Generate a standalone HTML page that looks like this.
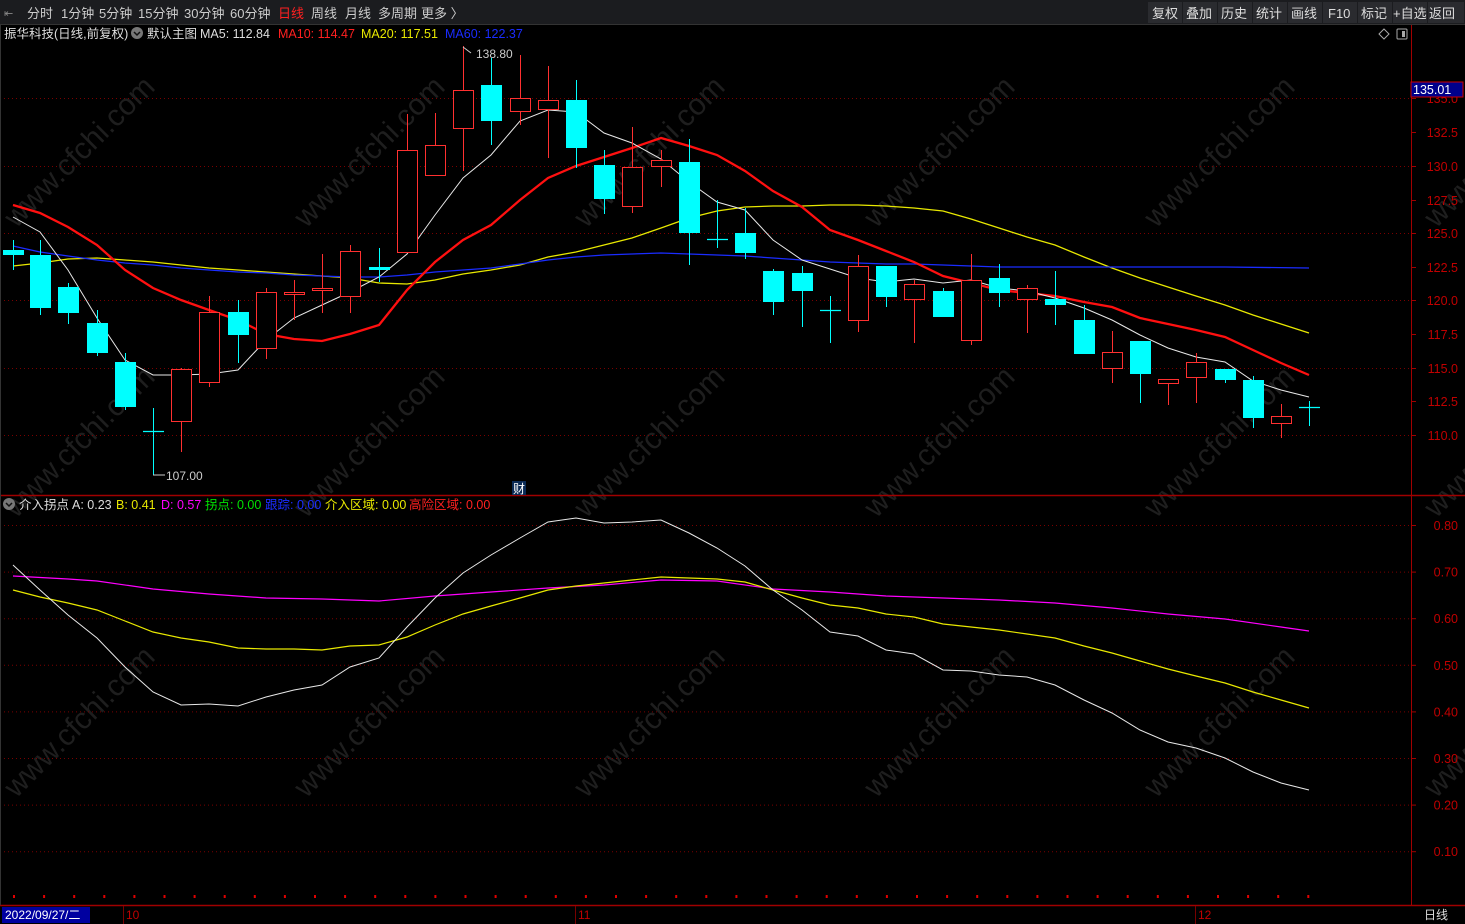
<!DOCTYPE html>
<html><head><meta charset="utf-8"><style>
html,body{margin:0;padding:0;background:#000;width:1465px;height:924px;overflow:hidden}
svg{display:block}
text{font-family:"Liberation Sans","Noto Sans CJK SC",sans-serif}
</style></head><body>
<svg id="s" width="1465" height="924" xmlns="http://www.w3.org/2000/svg">
<rect width="1465" height="924" fill="#000"/>
<g id="wm" fill="#1e1e1e" font-size="30"></g>
<!-- top bar -->
<rect x="0" y="0" width="1465" height="24" fill="#1b1c1f"/>
<line x1="0" y1="24.5" x2="1465" y2="24.5" stroke="#333"/>
<g font-size="13" fill="#ccc">
<text x="4" y="17" fill="#888" font-size="11">⇤</text>
<text x="27" y="18">分时</text><text x="61" y="18">1分钟</text><text x="99" y="18">5分钟</text>
<text x="138" y="18">15分钟</text><text x="184" y="18">30分钟</text><text x="230" y="18">60分钟</text>
<text x="278" y="18" fill="#ff2020">日线</text><text x="311" y="18">周线</text><text x="345" y="18">月线</text>
<text x="378" y="18">多周期</text><text x="421" y="18">更多 〉</text>
</g>
<g id="btns" font-size="13" fill="#ddd"></g>
<!-- legend -->
<g font-size="12.5">
<text x="4" y="38" fill="#ddd">振华科技(日线,前复权)</text>
<circle cx="137" cy="33" r="6" fill="#777"/><path d="M134 32l3 3 3-3" stroke="#111" stroke-width="1.5" fill="none"/>
<text x="147" y="38" fill="#ddd">默认主图</text>
<text x="200" y="38" fill="#ddd">MA5: 112.84</text>
<text x="278" y="38" fill="#ff2020">MA10: 114.47</text>
<text x="361" y="38" fill="#e8e800">MA20: 117.51</text>
<text x="445" y="38" fill="#1a2cff">MA60: 122.37</text>
</g>
<path d="M1384 29l5 5-5 5-5-5z" stroke="#aaa" fill="none"/>
<rect x="1397" y="29" width="10" height="10" rx="1" stroke="#aaa" fill="none"/><rect x="1402" y="31" width="3" height="6" fill="#aaa"/>
<g id="grid"></g>
<!-- axes -->
<line x1="1411.5" y1="25" x2="1411.5" y2="905" stroke="#a00000"/>
<line x1="0" y1="495.5" x2="1465" y2="495.5" stroke="#a00000" stroke-width="1.5"/>
<line x1="0" y1="905.5" x2="1465" y2="905.5" stroke="#a00000" stroke-width="1.5"/>
<line x1="0.5" y1="25" x2="0.5" y2="905" stroke="#333"/>
<g id="lines"></g>
<g id="cand"></g>
<rect x="1411" y="82" width="52" height="15" fill="#00008b" stroke="#c00"/>
<text x="1413" y="94" font-size="12.5" fill="#fff">135.01</text>
<text x="476" y="58" font-size="12" fill="#ccc">138.80</text>
<path d="M463 47l8 6" stroke="#ccc"/>
<text x="166" y="480" font-size="12" fill="#ccc">107.00</text>
<path d="M153 475h12" stroke="#ccc"/>
<rect x="512" y="481" width="14" height="14" fill="#0a2a55"/><text x="513" y="493" font-size="12" fill="#fff">财</text>
<!-- lower legend -->
<g font-size="12.5">
<circle cx="9" cy="504" r="6" fill="#777"/><path d="M6 503l3 3 3-3" stroke="#111" stroke-width="1.5" fill="none"/>
<text x="19" y="509" fill="#ddd">介入拐点</text>
<text x="72" y="509" fill="#ddd">A: 0.23</text>
<text x="116" y="509" fill="#e8e800">B: 0.41</text>
<text x="161" y="509" fill="#ff00ff">D: 0.57</text>
<text x="205" y="509" fill="#00e000">拐点: 0.00</text>
<text x="265" y="509" fill="#1a2cff">跟踪: 0.00</text>
<text x="325" y="509" fill="#e8e800">介入区域: 0.00</text>
<text x="409" y="509" fill="#ff2020">高险区域: 0.00</text>
</g>
<g id="dots" fill="#e00000"></g>
<!-- bottom bar -->
<rect x="2" y="907" width="88" height="16" fill="#0000a0"/>
<text x="5" y="919" font-size="12" fill="#fff">2022/09/27/二</text>
<g font-size="12" fill="#c00000"><text x="126" y="919">10</text><text x="578" y="919">11</text><text x="1198" y="919">12</text></g>
<g stroke="#700"><line x1="123.5" y1="906" x2="123.5" y2="924"/><line x1="575.5" y1="906" x2="575.5" y2="924"/><line x1="1195.5" y1="906" x2="1195.5" y2="924"/></g>
<text x="1424" y="919" font-size="12" fill="#ddd">日线</text>
</svg>
<script>
const NS="http://www.w3.org/2000/svg";
function el(p,t,a,txt){const e=document.createElementNS(NS,t);for(const k in a)e.setAttribute(k,a[k]);if(txt)e.textContent=txt;document.getElementById(p).appendChild(e);return e;}
// watermarks
[[0,230],[290,230],[570,230],[860,230],[1140,230],[0,520],[290,520],[570,520],[860,520],[1140,520],[0,800],[290,800],[570,800],[860,800],[1140,800],[1420,230],[1420,520],[1420,800]].forEach(p=>{
 el("wm","text",{x:p[0],y:p[1]-40,transform:`rotate(-45 ${p[0]+55} ${p[1]-40})`},"www.cfchi.com");});
// buttons
const b=[["复权",1152],["叠加",1186],["历史",1221],["统计",1256],["画线",1291],["F10",1326],["标记",1361],["+自选",1393],["返回",1429]];
let bx=[1148,1183,1218,1253,1288,1323,1358,1393,1428,1465];
b.forEach((v,i)=>{el("btns","rect",{x:bx[i],y:2,width:bx[i+1]-bx[i]-1,height:21,fill:"#2a2b2f"});el("btns","text",{x:v[1]+(v[0]=="F10"?2:0),y:18},v[0]);});
// grid main
const pr=[[135.0,98],[132.5,132],[130.0,166],[127.5,200],[125.0,233],[122.5,267],[120.0,300],[117.5,334],[115.0,368],[112.5,401],[110.0,435]];
pr.forEach(p=>{ if(p[0]!=132.5&&p[0]!=127.5&&p[0]!=122.5&&p[0]!=117.5&&p[0]!=112.5) el("grid","line",{x1:0,y1:p[1]+.5,x2:1410,y2:p[1]+.5,stroke:"#7a0000","stroke-dasharray":"1,3"});
 el("grid","line",{x1:1411,y1:p[1]+.5,x2:1416,y2:p[1]+.5,stroke:"#a00000"});
 el("grid","text",{x:1458,y:p[1]+5,"font-size":"12.5",fill:"#c00000","text-anchor":"end"},p[0].toFixed(1));});
// lower grid
for(let i=8;i>=1;i--){const y=525+(8-i)*46.6;el("grid","line",{x1:0,y1:y+.5,x2:1410,y2:y+.5,stroke:"#7a0000","stroke-dasharray":"1,3"});
 el("grid","line",{x1:1411,y1:y+.5,x2:1416,y2:y+.5,stroke:"#a00000"});
 el("grid","text",{x:1458,y:y+5,"font-size":"12.5",fill:"#c00000","text-anchor":"end"},"0."+i+"0");}
// lines
function pl(pts,c,w){el("lines","polyline",{points:pts.map(p=>p.join(",")).join(" "),fill:"none",stroke:c,"stroke-width":w});}
pl([[13,266],[40,263],[68,259],[97,258],[125,260],[153,262],[181,265],[209,268],[238,270],[266,272],[294,274],[322,276],[350,278],[379,283],[407,284],[435,280],[463,274],[491,270],[520,265],[548,257],[576,252],[604,245],[632,238],[661,228],[689,218],[717,211],[745,207],[773,206],[802,206],[830,205],[858,205],[886,206],[914,208],[943,211],[971,219],[999,228],[1027,237],[1055,245],[1084,257],[1112,268],[1140,278],[1168,287],[1196,296],[1225,305],[1253,315],[1281,324],[1309,333]],"#e8e800",1.3);
pl([[13,246],[40,252],[68,256],[97,260],[125,263],[153,265],[181,268],[209,270],[238,272],[266,273],[294,275],[322,276],[350,277],[379,277],[407,275],[435,272],[463,270],[491,268],[520,264],[548,260],[576,257],[604,255],[632,254],[661,253],[689,254],[717,255],[745,256],[773,258],[802,260],[830,262],[858,263],[886,264],[914,264],[943,265],[971,266],[999,267],[1055,267],[1140,267],[1225,267],[1309,268]],"#1a2cff",1.3);
pl([[13,205],[40,213],[68,227],[97,245],[125,270],[153,288],[181,300],[209,310],[238,320],[266,334],[294,339],[322,341],[350,334],[379,325],[407,290],[435,262],[463,240],[491,225],[520,200],[548,178],[576,166],[604,157],[632,148],[661,138],[689,146],[717,155],[745,171],[773,191],[802,207],[830,230],[858,240],[886,251],[914,262],[943,276],[971,283],[999,290],[1027,293],[1055,296],[1084,302],[1112,307],[1140,318],[1168,324],[1196,330],[1225,337],[1253,350],[1281,363],[1309,375]],"#ff1010",2.3);
pl([[13,217],[40,232],[68,270],[97,318],[125,360],[153,375],[181,375],[209,374],[238,370],[266,340],[294,318],[322,305],[350,292],[379,277],[407,254],[435,215],[463,178],[491,155],[520,121],[548,110],[576,112],[604,133],[632,143],[661,159],[689,182],[717,202],[745,210],[773,240],[802,260],[830,269],[858,278],[886,282],[914,279],[943,283],[971,280],[999,288],[1027,291],[1055,298],[1084,308],[1112,320],[1140,335],[1168,348],[1196,357],[1225,362],[1253,381],[1281,390],[1309,397]],"#e8e8e8",1);
pl([[13,576],[68,579],[97,581],[153,589],[209,594],[266,598],[322,599],[379,601],[435,596],[491,592],[548,588],[604,585],[661,580],[717,581],[773,589],[830,592],[886,596],[943,598],[999,600],[1055,603],[1112,608],[1168,614],[1225,619],[1281,627],[1309,631]],"#ff00ff",1.2);
pl([[13,590],[40,597],[68,603],[97,610],[125,621],[153,632],[181,638],[209,642],[238,648],[266,649],[294,649],[322,650],[350,646],[379,645],[407,637],[435,625],[463,614],[491,606],[520,598],[548,590],[576,586],[604,583],[632,580],[661,577],[689,578],[717,579],[745,582],[773,590],[802,598],[830,605],[858,608],[886,614],[914,617],[943,624],[971,627],[999,630],[1027,634],[1055,638],[1084,646],[1112,653],[1140,661],[1168,669],[1196,676],[1225,683],[1253,692],[1281,700],[1309,708]],"#e8e800",1.2);
pl([[13,565],[40,590],[68,615],[97,638],[125,667],[153,692],[181,705],[209,704],[238,706],[266,697],[294,690],[322,685],[350,667],[379,658],[407,627],[435,598],[463,573],[491,555],[520,538],[548,522],[576,518],[604,523],[632,522],[661,520],[689,533],[717,548],[745,566],[773,590],[802,610],[830,632],[858,636],[886,650],[914,654],[943,670],[971,671],[999,675],[1027,677],[1055,685],[1084,700],[1112,713],[1140,730],[1168,742],[1196,748],[1225,758],[1253,772],[1281,783],[1309,790]],"#e8e8e8",1);
// candles [x, top, bottom, high, low, color c/r]
const C=[[13,250,255,240,270,"c"],[40,255,308,240,315,"c"],[68,287,313,283,324,"c"],[97,323,353,310,356,"c"],[125,362,407,353,410,"c"],[153,431,431,408,475,"c"],[181,369,422,368,452,"r"],[209,312,383,296,387,"r"],[238,312,335,300,363,"c"],[266,292,349,288,359,"r"],[294,292,295,280,320,"r"],[322,288,291,254,313,"r"],[350,251,297,245,313,"r"],[379,267,270,248,282,"c"],[407,150,253,114,253,"r"],[435,145,176,113,176,"r"],[463,90,129,46,171,"r"],[491,85,121,58,145,"c"],[520,98,112,55,125,"r"],[548,100,110,66,158,"r"],[576,100,148,80,168,"c"],[604,165,199,150,214,"c"],[632,167,207,127,213,"r"],[661,160,167,150,187,"r"],[689,162,233,139,265,"c"],[717,239,239,200,248,"c"],[745,233,253,208,259,"c"],[773,271,302,269,315,"c"],[802,273,291,266,327,"c"],[830,310,310,296,343,"c"],[858,266,321,255,332,"r"],[886,266,297,266,307,"c"],[914,284,300,280,343,"r"],[943,291,317,288,317,"c"],[971,280,341,254,345,"r"],[999,278,293,264,307,"c"],[1027,288,300,285,333,"r"],[1055,299,305,271,325,"c"],[1084,320,354,305,354,"c"],[1112,352,369,331,383,"r"],[1140,341,374,341,403,"c"],[1168,379,384,379,405,"r"],[1196,362,378,353,403,"r"],[1225,369,380,369,383,"c"],[1253,380,418,376,428,"c"],[1281,416,424,404,438,"r"],[1309,407,407,401,426,"c"]];
C.forEach(k=>{const [x,t,bt,h,l,c]=k;const col=c=="c"?"#00ffff":"#ff3030";
 el("cand","line",{x1:x+.5,y1:h,x2:x+.5,y2:l,stroke:col});
 if(bt-t<2){el("cand","line",{x1:x-10,y1:t+.5,x2:x+11,y2:t+.5,stroke:col,"stroke-width":1.2});}
 else if(c=="c") el("cand","rect",{x:x-10,y:t,width:21,height:bt-t,fill:col});
 else el("cand","rect",{x:x-9.5,y:t+.5,width:20,height:bt-t-1,fill:"#000",stroke:col});});
for(let x=13;x<1320;x+=30.1) el("dots","rect",{x:x,y:895,width:2,height:3});
</script>
</body></html>
